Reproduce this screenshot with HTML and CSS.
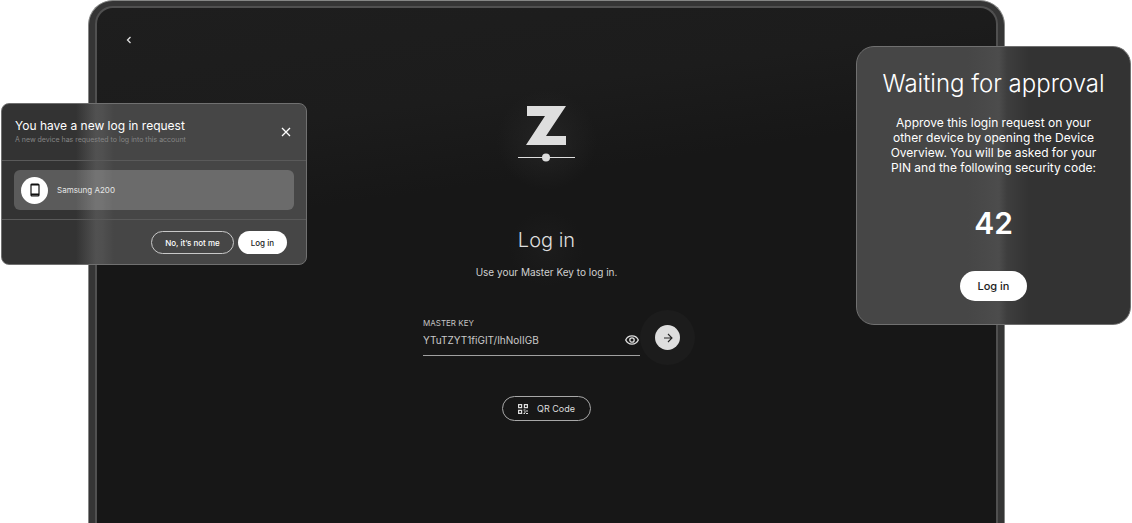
FILE: index.html
```html
<!DOCTYPE html>
<html lang="en">
<head>
<meta charset="utf-8">
<title>Log in</title>
<link rel="stylesheet" href="styles.css">
</head>
<body>
<div class="stage">
  <main class="device">
    <div class="screen">
      <button class="back" aria-label="Back"><svg width="6" height="8" viewBox="0 0 6 8"><path d="M4.5 1 1.5 4l3 3" fill="none" stroke="currentColor" stroke-width="1.3"/></svg></button>
      <svg class="logo" width="58" height="56" viewBox="0 0 58 56" role="img" aria-label="Logo">
        <path d="M9 0H48L28 30H48V39H8L27 10H9Z" fill="currentColor"/>
        <path d="M0 51.5H57" stroke="currentColor"/>
        <circle cx="28" cy="51.5" r="4" fill="currentColor"/>
      </svg>
      <h1 class="title">Log in</h1>
      <p class="lead">Use your Master Key to log in.</p>
      <form class="login">
        <div class="field">
          <label for="key">MASTER KEY</label>
          <div class="entry">
            <input id="key" type="text" value="YTuTZYT1fiGIT/IhNoIIGB">
            <button type="button" class="plain" aria-label="Show key"><svg width="14" height="10" viewBox="0 0 14 10" fill="none" stroke="currentColor" stroke-width="1.3"><path d="M.7 5C3.2-.4 10.8-.4 13.3 5C10.8 10.4 3.2 10.4.7 5Z"/><circle cx="7" cy="5" r="2.2"/></svg></button>
          </div>
        </div>
        <button type="button" class="submit" aria-label="Continue"><svg width="10" height="10" viewBox="0 0 10 10" fill="none" stroke="currentColor" stroke-width="1.1"><path d="M1 5h8M5 1l4 4-4 4"/></svg></button>
      </form>
      <button class="qr"><svg width="10" height="10" viewBox="0 0 10 10" fill="none" stroke="currentColor" stroke-width="1.2"><path d="M.6.6h3v3h-3zM6.4.6h3v3h-3zM.6 6.4h3v3h-3z"/><path d="M5.500 6h2M8 7h2M6 8h2M5.500 9.500h1.500M8 9.500h2"/></svg>QR Code</button>
    </div>
  </main>

  <section class="card request">
    <header class="request-head">
      <div>
        <h2>You have a new log in request</h2>
        <p>A new device has requested to log into this account</p>
      </div>
      <button class="plain" aria-label="Close"><svg width="10" height="10" viewBox="0 0 10 10"><path d="M1 1l8 8M9 1L1 9" stroke="currentColor" stroke-width="1.3"/></svg></button>
    </header>
    <div class="request-body">
      <div class="phone-row">
        <span class="phone"><svg width="10" height="14" viewBox="0 0 10 14"><rect x="1" y="1" width="8" height="12" rx="1" fill="none" stroke="currentColor" stroke-width="1.2"/><path d="M1 1h8v1.6H1zM1 10.500h8v2H1z" fill="currentColor"/></svg></span>
        Samsung A200
      </div>
    </div>
    <footer class="request-foot">
      <button class="outline">No, it’s not me</button>
      <button class="solid">Log in</button>
    </footer>
  </section>

  <section class="card approval">
    <h2>Waiting for approval</h2>
    <p>Approve this login request on your<br>other device by opening the Device<br>Overview. You will be asked for your<br>PIN and the following security code:</p>
    <strong>42</strong>
    <button class="solid">Log in</button>
  </section>
</div>
</body>
</html>
```
FILE: styles.css
```css
* { box-sizing: border-box; }
body { margin: 0; background: #fff; font-family: Inter, "Liberation Sans", sans-serif; color: #fff; }
h1, h2, p { margin: 0; font-weight: 400; }
button { font: inherit; color: inherit; background: none; border: 0; padding: 0; cursor: pointer; }
svg { display: block; }

.stage { position: relative; height: 100vh; overflow: hidden; }
.device {
  margin: 0 127px 0 88px;
  min-height: 100vh;
  padding: 5px 6px 0;
  border: 1px solid #858685;
  border-bottom: 0;
  border-radius: 25px 25px 0 0;
  background: #353535;
}
.screen {
  min-height: calc(100vh - 6px);
  display: flex;
  flex-direction: column;
  align-items: center;
  padding: 27px 24px 0;
  border: 2px solid #505050;
  border-bottom: 0;
  border-radius: 18px 18px 0 0;
  background:
    radial-gradient(circle at 50% 132px, #242424 0, #24242400 50px),
    radial-gradient(circle at 50% 240px, #1c1c1c 0, #1c1c1c00 38px),
    linear-gradient(172deg, #1e1e1e 0%, #1c1c1c 22%, #171717 36%, #171717 100%);
  color: #dedede;
}
.back { align-self: flex-start; width: 16px; height: 10px; display: grid; place-items: center; }
.logo { margin-top: 61px; }
.title { margin-top: 66px; font-size: 20px; line-height: 24px; font-weight: 300; }
.lead { margin-top: 13px; font-size: 10px; line-height: 14px; color: #d0d0d0; }
.login { display: flex; align-items: flex-end; gap: 15px; margin: 29px 0 0 10px; }
.field { width: 217px; padding-top: 10px; border-bottom: 1px solid #a0a0a0; }
.field label { display: block; font-size: 8px; line-height: 10px; color: #c4c4c4; }
.entry { display: flex; align-items: center; padding: 5px 1px 8px 0; }
.entry input {
  flex: 1; min-width: 0; height: 14px; padding: 0; border: 0; outline: 0;
  background: none; color: #cacaca; font: 10px/14px Inter, "Liberation Sans", sans-serif;
}
.plain { flex: none; }
.submit {
  width: 25px; height: 25px; margin-bottom: 6px; border-radius: 50%; display: grid; place-items: center;
  background: #dedede; color: #252525; box-shadow: 0 0 0 15px #ffffff06;
}
.qr {
  display: flex; align-items: center; gap: 9px; height: 25px; margin-top: 40px; padding: 0 15px;
  border: 1px solid #a8a8a8; border-radius: 13px; font-size: 9px;
}

.card { position: absolute; border: 1px solid #707070; }
.request {
  top: 103px; left: 1px; width: 306px; border-radius: 8px;
  background: linear-gradient(90deg, #333 0, #333 74px, #515151 94px, #505050 100px, #464646 112px, #464646 100%);
}
.request-head {
  display: flex; justify-content: space-between; align-items: center;
  padding: 14px 15px 14px 13px; border-bottom: 1px solid #5a5a5a;
}
.request-head h2 { font-size: 12px; line-height: 16px; }
.request-head p { font-size: 7px; line-height: 12px; color: #858585; }
.request-body { padding: 9px 12px; border-bottom: 1px solid #5a5a5a; }
.phone-row {
  display: flex; align-items: center; gap: 9px; height: 40px; padding: 0 7px;
  border-radius: 6px; background: #ffffff33; font-size: 8px; color: #e6e6e6;
}
.phone { display: grid; place-items: center; width: 27px; height: 27px; border-radius: 50%; background: #fff; color: #111; }
.request-foot { display: flex; justify-content: flex-end; gap: 4px; padding: 11px 19px 10px; }
.request-foot button { height: 23px; border-radius: 12px; padding: 0 13px; font-size: 8px; font-weight: 500; }
.outline { border: 1px solid #c8c8c8; }
.solid { background: #fff; color: #222; }

.approval {
  top: 46px; left: calc(100% - 276px); width: 275px; border-radius: 18px;
  display: flex; flex-direction: column; align-items: center;
  padding: 21px 16px 23px; text-align: center;
  background: linear-gradient(90deg, #464646 0, #464646 110px, #4c4c4c 142px, #3e3e3e 150px, #333 172px, #333 100%);
}
.approval h2 { font-size: 24px; line-height: 32px; font-weight: 300; white-space: nowrap; }
.approval p { margin-top: 15px; font-size: 12px; line-height: 15px; white-space: nowrap; }
.approval strong { margin-top: 30px; font-size: 30px; line-height: 36px; font-weight: 600; }
.approval .solid { width: 67px; height: 30px; margin-top: 30px; border-radius: 15px; font-size: 11px; font-weight: 500; }
```
